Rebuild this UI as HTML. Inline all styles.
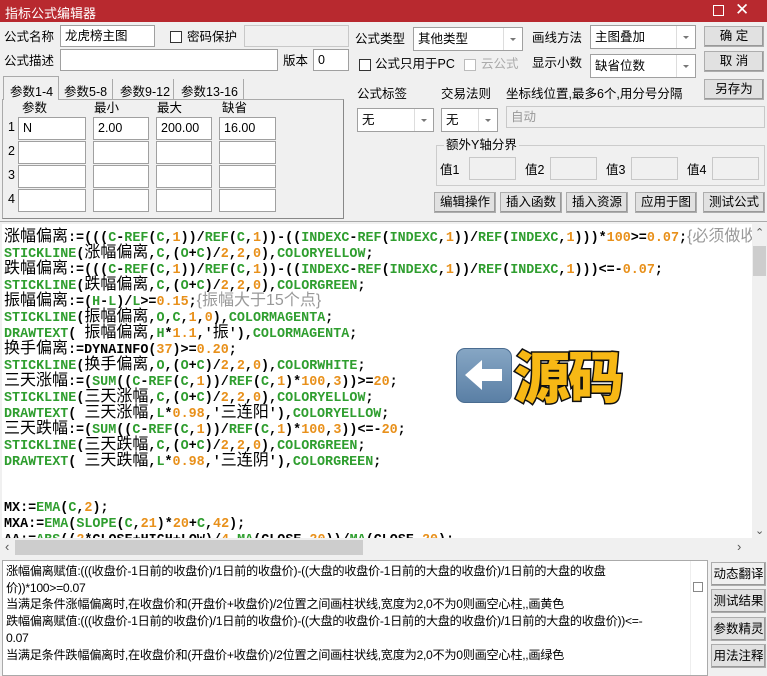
<!DOCTYPE html>
<html><head><meta charset="utf-8"><style>
*{box-sizing:border-box;margin:0;padding:0}
body{width:767px;height:676px;overflow:hidden;background:#f0f0f0;font-family:"Liberation Sans","Noto Sans CJK SC",sans-serif;font-size:12px;color:#000;position:relative}
.a{position:absolute;white-space:nowrap}
.t{position:absolute;white-space:nowrap;font-size:12.5px;line-height:16px}
.in{position:absolute;background:#fff;border:1px solid #a0a0a0;font-size:12.5px;padding:2px 4px;line-height:16px}
.dis{background:#f0f0f0;color:#999;border-color:#c8c8c8}
.cb{position:absolute;width:12px;height:12px;border:1px solid #333;background:#fff}
.sel{position:absolute;background:#fff;border:1px solid #a0a0a0;font-size:12.5px;padding:2px 4px;line-height:18px}
.sel:after{content:"";position:absolute;right:0;top:0;bottom:0;width:18px;border-left:1px solid #ddd;background:#fff}
.sel i{position:absolute;right:6px;top:10px;border-left:3px solid transparent;border-right:3px solid transparent;border-top:3px solid #777;z-index:2}
.btn{position:absolute;background:#e1e1e1;border:1px solid #adadad;font-size:12.5px;text-align:center;line-height:18px;box-shadow:inset -1px -1px 0 #999}
#code{position:absolute;left:2px;top:224px;width:750px;height:314px;background:#fff;overflow:hidden;font-family:"Liberation Mono",monospace;font-weight:bold;font-size:13.4px;line-height:16px;padding-top:5px;padding-left:2px}
#code div{height:16px;white-space:nowrap}
.z{font-family:"Liberation Sans","Noto Sans CJK SC",sans-serif;font-weight:normal;font-size:16px}
.g{color:#2f9e2f}.o{color:#e8901a}.c{color:#999;font-weight:normal}
</style></head><body>
<div class="a" style="left:0;top:0;width:767px;height:22px;background:#b8292f"></div>
<div class="a" style="left:5px;top:3px;color:#fff;font-size:13px">指标公式编辑器</div>
<div class="a" style="left:713px;top:5px;width:11px;height:11px;border:1px solid #fff"></div>
<div class="a" style="left:735px;top:0px;color:#fff;font-size:17px">✕</div>

<div class="t" style="left:4px;top:29px">公式名称</div>
<div class="in" style="left:60px;top:25px;width:95px;height:22px">龙虎榜主图</div>
<div class="cb" style="left:170px;top:31px"></div>
<div class="t" style="left:187px;top:29px">密码保护</div>
<div class="in dis" style="left:244px;top:25px;width:105px;height:22px"></div>
<div class="t" style="left:4px;top:53px">公式描述</div>
<div class="in" style="left:60px;top:49px;width:218px;height:22px"></div>
<div class="t" style="left:283px;top:53px">版本</div>
<div class="in" style="left:313px;top:49px;width:36px;height:22px">0</div>

<div class="a" style="left:2px;top:99px;width:342px;height:120px;border:1px solid #aaa;border-right-color:#888;border-bottom-color:#888"></div>
<div class="a" style="left:3px;top:76px;width:56px;height:24px;background:#f0f0f0;border:1px solid #aaa;border-bottom:none;font-size:12.5px;padding:4px 0 0 6px">参数1-4</div>
<div class="a" style="left:60px;top:79px;width:53px;height:20px;border-right:1px solid #aaa;font-size:12.5px;padding:2px 0 0 4px">参数5-8</div>
<div class="a" style="left:114px;top:79px;width:60px;height:20px;border-right:1px solid #aaa;font-size:12.5px;padding:2px 0 0 6px">参数9-12</div>
<div class="a" style="left:175px;top:79px;width:69px;height:20px;border-right:1px solid #aaa;font-size:12.5px;padding:2px 0 0 6px">参数13-16</div>
<div class="t" style="left:22px;top:100px">参数</div>
<div class="t" style="left:94px;top:100px">最小</div>
<div class="t" style="left:157px;top:100px">最大</div>
<div class="t" style="left:222px;top:100px">缺省</div>
<div class="t" style="left:8px;top:119px">1</div><div class="t" style="left:8px;top:143px">2</div><div class="t" style="left:8px;top:167px">3</div><div class="t" style="left:8px;top:191px">4</div>
<div class="in" style="left:18px;top:117px;width:68px;height:23px">N</div>
<div class="in" style="left:93px;top:117px;width:56px;height:23px">2.00</div>
<div class="in" style="left:156px;top:117px;width:56px;height:23px">200.00</div>
<div class="in" style="left:219px;top:117px;width:57px;height:23px">16.00</div>
<div class="in" style="left:18px;top:141px;width:68px;height:23px"></div><div class="in" style="left:93px;top:141px;width:56px;height:23px"></div><div class="in" style="left:156px;top:141px;width:56px;height:23px"></div><div class="in" style="left:219px;top:141px;width:57px;height:23px"></div>
<div class="in" style="left:18px;top:165px;width:68px;height:23px"></div><div class="in" style="left:93px;top:165px;width:56px;height:23px"></div><div class="in" style="left:156px;top:165px;width:56px;height:23px"></div><div class="in" style="left:219px;top:165px;width:57px;height:23px"></div>
<div class="in" style="left:18px;top:189px;width:68px;height:23px"></div><div class="in" style="left:93px;top:189px;width:56px;height:23px"></div><div class="in" style="left:156px;top:189px;width:56px;height:23px"></div><div class="in" style="left:219px;top:189px;width:57px;height:23px"></div>

<div class="t" style="left:355px;top:31px">公式类型</div>
<div class="sel" style="left:413px;top:27px;width:110px;height:24px">其他类型<i></i></div>
<div class="t" style="left:532px;top:30px">画线方法</div>
<div class="sel" style="left:590px;top:25px;width:106px;height:24px">主图叠加<i></i></div>
<div class="btn" style="left:704px;top:26px;width:60px;height:21px">确 定</div>
<div class="btn" style="left:704px;top:51px;width:60px;height:21px">取 消</div>
<div class="btn" style="left:704px;top:79px;width:60px;height:21px">另存为</div>
<div class="cb" style="left:359px;top:59px"></div>
<div class="t" style="left:375px;top:56px">公式只用于PC</div>
<div class="cb" style="left:464px;top:59px;border-color:#bbb"></div>
<div class="t" style="left:481px;top:56px;color:#aaa">云公式</div>
<div class="t" style="left:532px;top:55px">显示小数</div>
<div class="sel" style="left:590px;top:54px;width:106px;height:24px">缺省位数<i></i></div>
<div class="t" style="left:357px;top:86px">公式标签</div>
<div class="t" style="left:441px;top:86px">交易法则</div>
<div class="t" style="left:506px;top:86px">坐标线位置,最多6个,用分号分隔</div>
<div class="sel" style="left:357px;top:108px;width:77px;height:24px">无<i></i></div>
<div class="sel" style="left:441px;top:108px;width:57px;height:24px">无<i></i></div>
<div class="in dis" style="left:506px;top:106px;width:259px;height:22px">自动</div>
<div class="a" style="left:436px;top:145px;width:329px;height:41px;border:1px solid #ccc"></div>
<div class="t" style="left:444px;top:137px;background:#f0f0f0;padding:0 2px">额外Y轴分界</div>
<div class="t" style="left:440px;top:162px">值1</div><div class="in dis" style="left:469px;top:157px;width:47px;height:23px;background:#f0f0f0"></div>
<div class="t" style="left:525px;top:162px">值2</div><div class="in dis" style="left:550px;top:157px;width:47px;height:23px;background:#f0f0f0"></div>
<div class="t" style="left:606px;top:162px">值3</div><div class="in dis" style="left:631px;top:157px;width:47px;height:23px;background:#f0f0f0"></div>
<div class="t" style="left:687px;top:162px">值4</div><div class="in dis" style="left:712px;top:157px;width:47px;height:23px;background:#f0f0f0"></div>
<div class="btn" style="left:434px;top:192px;width:62px;height:21px">编辑操作</div>
<div class="btn" style="left:500px;top:192px;width:62px;height:21px">插入函数</div>
<div class="btn" style="left:566px;top:192px;width:62px;height:21px">插入资源</div>
<div class="btn" style="left:635px;top:192px;width:62px;height:21px">应用于图</div>
<div class="btn" style="left:703px;top:192px;width:62px;height:21px">测试公式</div>

<div class="a" style="left:0;top:221px;width:767px;height:1px;background:#aaa"></div>
<div id="code">
<div><span class="z">涨幅偏离</span>:=(((<span class="g">C</span>-<span class="g">REF</span>(<span class="g">C</span>,<span class="o">1</span>))/<span class="g">REF</span>(<span class="g">C</span>,<span class="o">1</span>))-((<span class="g">INDEXC</span>-<span class="g">REF</span>(<span class="g">INDEXC</span>,<span class="o">1</span>))/<span class="g">REF</span>(<span class="g">INDEXC</span>,<span class="o">1</span>)))*<span class="o">100</span>&gt;=<span class="o">0.07</span>;<span class="z c">{必须做收</span></div>
<div><span class="g">STICKLINE</span>(<span class="z">涨幅偏离</span>,<span class="g">C</span>,(<span class="g">O</span>+<span class="g">C</span>)/<span class="o">2</span>,<span class="o">2</span>,<span class="o">0</span>),<span class="g">COLORYELLOW</span>;</div>
<div><span class="z">跌幅偏离</span>:=(((<span class="g">C</span>-<span class="g">REF</span>(<span class="g">C</span>,<span class="o">1</span>))/<span class="g">REF</span>(<span class="g">C</span>,<span class="o">1</span>))-((<span class="g">INDEXC</span>-<span class="g">REF</span>(<span class="g">INDEXC</span>,<span class="o">1</span>))/<span class="g">REF</span>(<span class="g">INDEXC</span>,<span class="o">1</span>)))&lt;=-<span class="o">0.07</span>;</div>
<div><span class="g">STICKLINE</span>(<span class="z">跌幅偏离</span>,<span class="g">C</span>,(<span class="g">O</span>+<span class="g">C</span>)/<span class="o">2</span>,<span class="o">2</span>,<span class="o">0</span>),<span class="g">COLORGREEN</span>;</div>
<div><span class="z">振幅偏离</span>:=(<span class="g">H</span>-<span class="g">L</span>)/<span class="g">L</span>&gt;=<span class="o">0.15</span>;<span class="z c">{振幅大于15个点}</span></div>
<div><span class="g">STICKLINE</span>(<span class="z">振幅偏离</span>,<span class="g">O</span>,<span class="g">C</span>,<span class="o">1</span>,<span class="o">0</span>),<span class="g">COLORMAGENTA</span>;</div>
<div><span class="g">DRAWTEXT</span>( <span class="z">振幅偏离</span>,<span class="g">H</span>*<span class="o">1.1</span>,'<span class="z">振</span>'),<span class="g">COLORMAGENTA</span>;</div>
<div><span class="z">换手偏离</span>:=DYNAINFO(<span class="o">37</span>)&gt;=<span class="o">0.20</span>;</div>
<div><span class="g">STICKLINE</span>(<span class="z">换手偏离</span>,<span class="g">O</span>,(<span class="g">O</span>+<span class="g">C</span>)/<span class="o">2</span>,<span class="o">2</span>,<span class="o">0</span>),<span class="g">COLORWHITE</span>;</div>
<div><span class="z">三天涨幅</span>:=(<span class="g">SUM</span>((<span class="g">C</span>-<span class="g">REF</span>(<span class="g">C</span>,<span class="o">1</span>))/<span class="g">REF</span>(<span class="g">C</span>,<span class="o">1</span>)*<span class="o">100</span>,<span class="o">3</span>))&gt;=<span class="o">20</span>;</div>
<div><span class="g">STICKLINE</span>(<span class="z">三天涨幅</span>,<span class="g">C</span>,(<span class="g">O</span>+<span class="g">C</span>)/<span class="o">2</span>,<span class="o">2</span>,<span class="o">0</span>),<span class="g">COLORYELLOW</span>;</div>
<div><span class="g">DRAWTEXT</span>( <span class="z">三天涨幅</span>,<span class="g">L</span>*<span class="o">0.98</span>,'<span class="z">三连阳</span>'),<span class="g">COLORYELLOW</span>;</div>
<div><span class="z">三天跌幅</span>:=(<span class="g">SUM</span>((<span class="g">C</span>-<span class="g">REF</span>(<span class="g">C</span>,<span class="o">1</span>))/<span class="g">REF</span>(<span class="g">C</span>,<span class="o">1</span>)*<span class="o">100</span>,<span class="o">3</span>))&lt;=-<span class="o">20</span>;</div>
<div><span class="g">STICKLINE</span>(<span class="z">三天跌幅</span>,<span class="g">C</span>,(<span class="g">O</span>+<span class="g">C</span>)/<span class="o">2</span>,<span class="o">2</span>,<span class="o">0</span>),<span class="g">COLORGREEN</span>;</div>
<div><span class="g">DRAWTEXT</span>( <span class="z">三天跌幅</span>,<span class="g">L</span>*<span class="o">0.98</span>,'<span class="z">三连阴</span>'),<span class="g">COLORGREEN</span>;</div>
<div></div><div></div>
<div>MX:=<span class="g">EMA</span>(<span class="g">C</span>,<span class="o">2</span>);</div>
<div>MXA:=<span class="g">EMA</span>(<span class="g">SLOPE</span>(<span class="g">C</span>,<span class="o">21</span>)*<span class="o">20</span>+<span class="g">C</span>,<span class="o">42</span>);</div>
<div>AA:=<span class="g">ABS</span>((<span class="o">2</span>*CLOSE+HIGH+LOW)/<span class="o">4</span>-<span class="g">MA</span>(CLOSE,<span class="o">20</span>))/<span class="g">MA</span>(CLOSE,<span class="o">20</span>);</div>
</div>
<div class="a" style="left:752px;top:224px;width:15px;height:314px;background:#f0f0f0"></div>
<div class="a" style="left:755px;top:226px;font-size:11px;color:#555">⌃</div>
<div class="a" style="left:753px;top:246px;width:13px;height:30px;background:#cdcdcd"></div>
<div class="a" style="left:755px;top:524px;font-size:11px;color:#555">⌄</div>
<div class="a" style="left:2px;top:538px;width:750px;height:18px;background:#f0f0f0"></div>
<div class="a" style="left:15px;top:540px;width:348px;height:15px;background:#cdcdcd"></div>
<div class="a" style="left:5px;top:539px;font-size:13px;color:#555">‹</div>
<div class="a" style="left:737px;top:539px;font-size:13px;color:#555">›</div>

<div class="a" style="left:456px;top:348px;width:56px;height:55px;border-radius:9px;background:linear-gradient(#86a6c4,#5a7fa5);border:1px solid #4a6c90"></div>
<svg class="a" style="left:456px;top:348px" width="56" height="55" viewBox="0 0 56 55"><path d="M9 27 L26 12 L26 21 L46 21 L46 33 L26 33 L26 42 Z" fill="#fff"/></svg>
<div class="a" style="left:514px;top:340px;font-family:'Noto Sans CJK SC',sans-serif;font-weight:900;font-size:56px;line-height:70px;color:#f7b815;-webkit-text-stroke:3px #111;paint-order:stroke fill;letter-spacing:-2px">源码</div>

<div class="a" style="left:2px;top:560px;width:706px;height:116px;background:#fff;border:1px solid #aaa"></div>
<div class="a" style="left:6px;top:563px;font-size:12.2px;line-height:16.7px;white-space:normal;width:680px;letter-spacing:-0.3px">涨幅偏离赋值:(((收盘价-1日前的收盘价)/1日前的收盘价)-((大盘的收盘价-1日前的大盘的收盘价)/1日前的大盘的收盘<br>价))*100&gt;=0.07<br>当满足条件涨幅偏离时,在收盘价和(开盘价+收盘价)/2位置之间画柱状线,宽度为2,0不为0则画空心柱,,画黄色<br>跌幅偏离赋值:(((收盘价-1日前的收盘价)/1日前的收盘价)-((大盘的收盘价-1日前的大盘的收盘价)/1日前的大盘的收盘价))&lt;=-<br>0.07<br>当满足条件跌幅偏离时,在收盘价和(开盘价+收盘价)/2位置之间画柱状线,宽度为2,0不为0则画空心柱,,画绿色</div>
<div class="a" style="left:690px;top:561px;width:17px;height:114px;background:#fff;border-left:1px solid #eee"></div>
<div class="a" style="left:693px;top:582px;width:10px;height:10px;border:1px solid #888"></div>
<div class="btn" style="left:711px;top:562px;width:55px;height:24px;line-height:22px;background:#f0f0f0">动态翻译</div>
<div class="btn" style="left:711px;top:589px;width:55px;height:24px;line-height:22px">测试结果</div>
<div class="btn" style="left:711px;top:617px;width:55px;height:24px;line-height:22px">参数精灵</div>
<div class="btn" style="left:711px;top:644px;width:55px;height:24px;line-height:22px">用法注释</div>
</body></html>
